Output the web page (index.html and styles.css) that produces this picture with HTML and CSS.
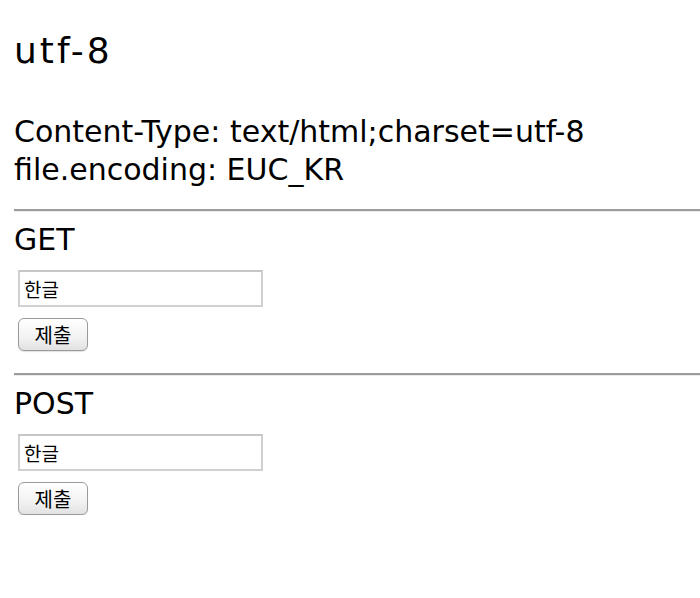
FILE: index.html
```html
<!DOCTYPE html>
<html lang="ko">
<head>
<meta charset="utf-8">
<title>utf-8</title>
<link rel="stylesheet" href="styles.css">
</head>
<body>
<div class="page">
  <h1 class="title">utf-8</h1>
  <p class="info">Content-Type: text/html;charset=utf-8<br>file.encoding: EUC_KR</p>
  <hr class="rule">
  <form class="form">
    <div class="label">GET</div>
    <input class="field" type="text" value="한글">
    <button class="submit" type="button">제출</button>
  </form>
  <hr class="rule">
  <form class="form">
    <div class="label">POST</div>
    <input class="field" type="text" value="한글">
    <button class="submit" type="button">제출</button>
  </form>
</div>
</body>
</html>
```

FILE: styles.css
```css
html, body {
  margin: 0;
  padding: 0;
  background: #fff;
}
.page {
  padding-left: 14px;
  font-family: "DejaVu Sans", "Noto Sans CJK KR", sans-serif;
  color: #000;
}
.title {
  margin: 31px 0 0;
  font-size: 36px;
  line-height: 40px;
  font-weight: normal;
  letter-spacing: 3px;
}
.info {
  margin: 42px 0 0;
  font-size: 30px;
  line-height: 38px;
}
.rule {
  margin: 20px 0 0;
  height: 0;
  border: 0;
  border-top: 2px solid #9c9c9c;
  border-bottom: 1px solid #ececec;
}
.form {
  display: flex;
  flex-direction: column;
  align-items: flex-start;
  margin: 0;
}
.form + .rule {
  margin-top: 22px;
}
.label {
  margin-top: 9px;
  font-size: 30px;
  line-height: 38px;
}
.field {
  box-sizing: border-box;
  margin: 11px 0 0 4px;
  width: 245px;
  height: 37px;
  padding: 0 4px;
  border: 2px solid #d0d0d0;
  border-top-color: #c6c6c6;
  background: #fff;
  font-family: "Noto Sans CJK KR", sans-serif;
  font-size: 19px;
  color: #000;
  outline: none;
}
.submit {
  box-sizing: border-box;
  margin: 11px 0 0 4px;
  width: 70px;
  height: 33px;
  padding: 0;
  border: 1px solid #9a9a9a;
  border-radius: 6px;
  background: linear-gradient(#ffffff, #f2f2f2 60%, #e2e2e2);
  box-shadow: 0 1px 1px rgba(0,0,0,0.12);
  font-family: "Noto Sans CJK KR", sans-serif;
  font-size: 20px;
  color: #000;
}
```
